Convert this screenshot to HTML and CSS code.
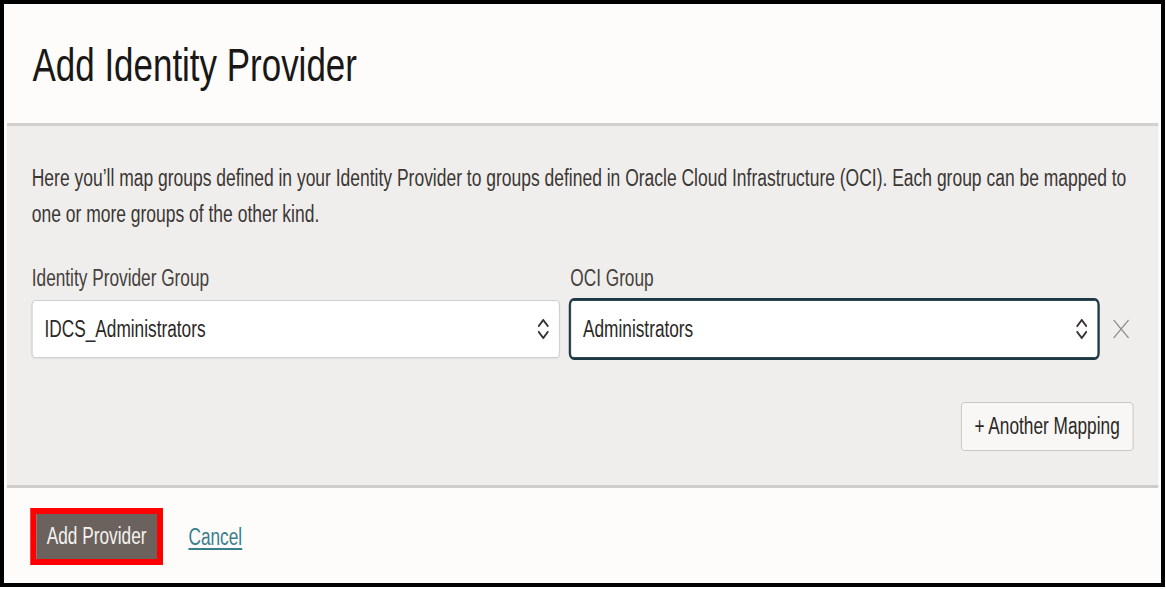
FILE: index.html
```html
<!DOCTYPE html>
<html lang="en">
<head>
<meta charset="utf-8">
<title>Add Identity Provider</title>
<link rel="stylesheet" href="styles.css">
</head>
<body>
<div class="frame">
  <div class="dialog">
    <header class="dialog-header">
      <h1 class="title">Add Identity Provider</h1>
    </header>
    <section class="dialog-body">
      <p class="intro">Here you’ll map groups defined in your Identity Provider to groups defined in Oracle Cloud Infrastructure (OCI). Each group can be mapped to one or more groups of the other kind.</p>
      <div class="mapping">
        <label class="field-label">Identity Provider Group</label>
        <label class="field-label">OCI Group</label>
        <span class="spacer"></span>
        <div class="select">
          <span class="select-value">IDCS_Administrators</span>
          <svg class="chev" viewBox="0 0 18 28" width="18" height="28"><path d="M3 11 L9 5 L15 11 M3 17 L9 23 L15 17" fill="none" stroke="#3a3633" stroke-width="2.4" stroke-linecap="round" stroke-linejoin="round"/></svg>
        </div>
        <div class="select select-focus">
          <span class="select-value">Administrators</span>
          <svg class="chev" viewBox="0 0 18 28" width="18" height="28"><path d="M3 11 L9 5 L15 11 M3 17 L9 23 L15 17" fill="none" stroke="#3a3633" stroke-width="2.4" stroke-linecap="round" stroke-linejoin="round"/></svg>
        </div>
        <svg class="remove" viewBox="0 0 23 20" width="23" height="20"><path d="M1.5 1 L21.5 19 M21.5 1 L1.5 19" fill="none" stroke="#8e8c8a" stroke-width="1.6"/></svg>
      </div>
      <div class="add-row">
        <button class="btn-secondary" type="button">+ Another Mapping</button>
      </div>
    </section>
    <footer class="dialog-footer">
      <span class="highlight"><button class="btn-primary" type="button">Add Provider</button></span>
      <a class="cancel" href="#">Cancel</a>
    </footer>
  </div>
</div>
</body>
</html>
```
FILE: styles.css
```css
html, body {
  margin: 0;
  padding: 0;
  background: #ffffff;
}

.frame {
  width: 1157px;
  height: 579px;
  border: 4px solid #000;
  overflow: hidden;
  background: #fdfcfb;
}

/* screenshot is horizontally compressed; lay out wide, then squeeze */
.dialog {
  width: 1542.67px;
  transform: scaleX(0.75);
  transform-origin: 0 0;
  font-family: "Liberation Sans", Arial, sans-serif;
  color: #312e2b;
}

.dialog-header {
  height: 119px;
  box-sizing: border-box;
  padding: 34px 38px 31px 38px;
  background: #fdfcfb;
}

.title {
  margin: 0;
  font-size: 46.6px;
  line-height: 54px;
  font-weight: 400;
  color: #1a1816;
}

.dialog-body {
  margin: 0 4px;
  border-top: 3px solid #d3d1cf;
  border-bottom: 3px solid #cfcdcb;
  background: #f0eeec;
  padding: 34px 33px 34px 33px;
  height: 365px;
  box-sizing: border-box;
}

.intro {
  margin: 0;
  font-size: 23.3px;
  line-height: 36px;
  color: #3a3734;
}

.mapping {
  margin-top: 31px;
  display: grid;
  grid-template-columns: 704px 704px 1fr;
  column-gap: 14px;
  row-gap: 7px;
  align-items: center;
}

.field-label {
  font-size: 23px;
  line-height: 30px;
  color: #45413e;
}

.select {
  height: 58px;
  box-sizing: border-box;
  border: 1px solid #cac8c6;
  border-radius: 5px;
  background: #ffffff;
  display: flex;
  align-items: center;
  justify-content: space-between;
  padding: 0 12px 0 16px;
  box-shadow: 0 1px 2px rgba(0, 0, 0, 0.06);
}

.select-focus {
  border-color: #1f3944;
  box-shadow: 0 0 0 2px #1f3944;
}

.select-value {
  font-size: 23px;
  line-height: 30px;
  color: #2b2825;
}

.chev {
  display: block;
  flex: none;
}

.remove {
  display: block;
  margin-left: 5px;
}

.add-row {
  margin-top: 44px;
  display: flex;
  justify-content: flex-end;
}

.btn-secondary {
  height: 49px;
  box-sizing: border-box;
  padding: 0 17px;
  border: 1px solid #c2c0be;
  border-radius: 5px;
  background: #f8f7f6;
  font-family: "Liberation Sans", Arial, sans-serif;
  font-size: 23px;
  color: #2b2825;
}

.dialog-footer {
  height: 95px;
  box-sizing: border-box;
  padding: 20px 35px 18px 35px;
  display: flex;
  align-items: center;
  gap: 34px;
  background: #fdfcfb;
}

.highlight {
  display: flex;
  border-style: solid;
  border-color: #ff0000;
  border-width: 6px 8px;
}

.btn-primary {
  height: 45px;
  box-sizing: border-box;
  padding: 0 14px;
  border: none;
  border-radius: 0;
  background: #6b625d;
  font-family: "Liberation Sans", Arial, sans-serif;
  font-size: 23px;
  color: #f4f2f0;
}

.cancel {
  font-size: 23px;
  line-height: 30px;
  color: #3a7d8c;
  text-decoration: underline;
  text-underline-offset: 3px;
}
```
